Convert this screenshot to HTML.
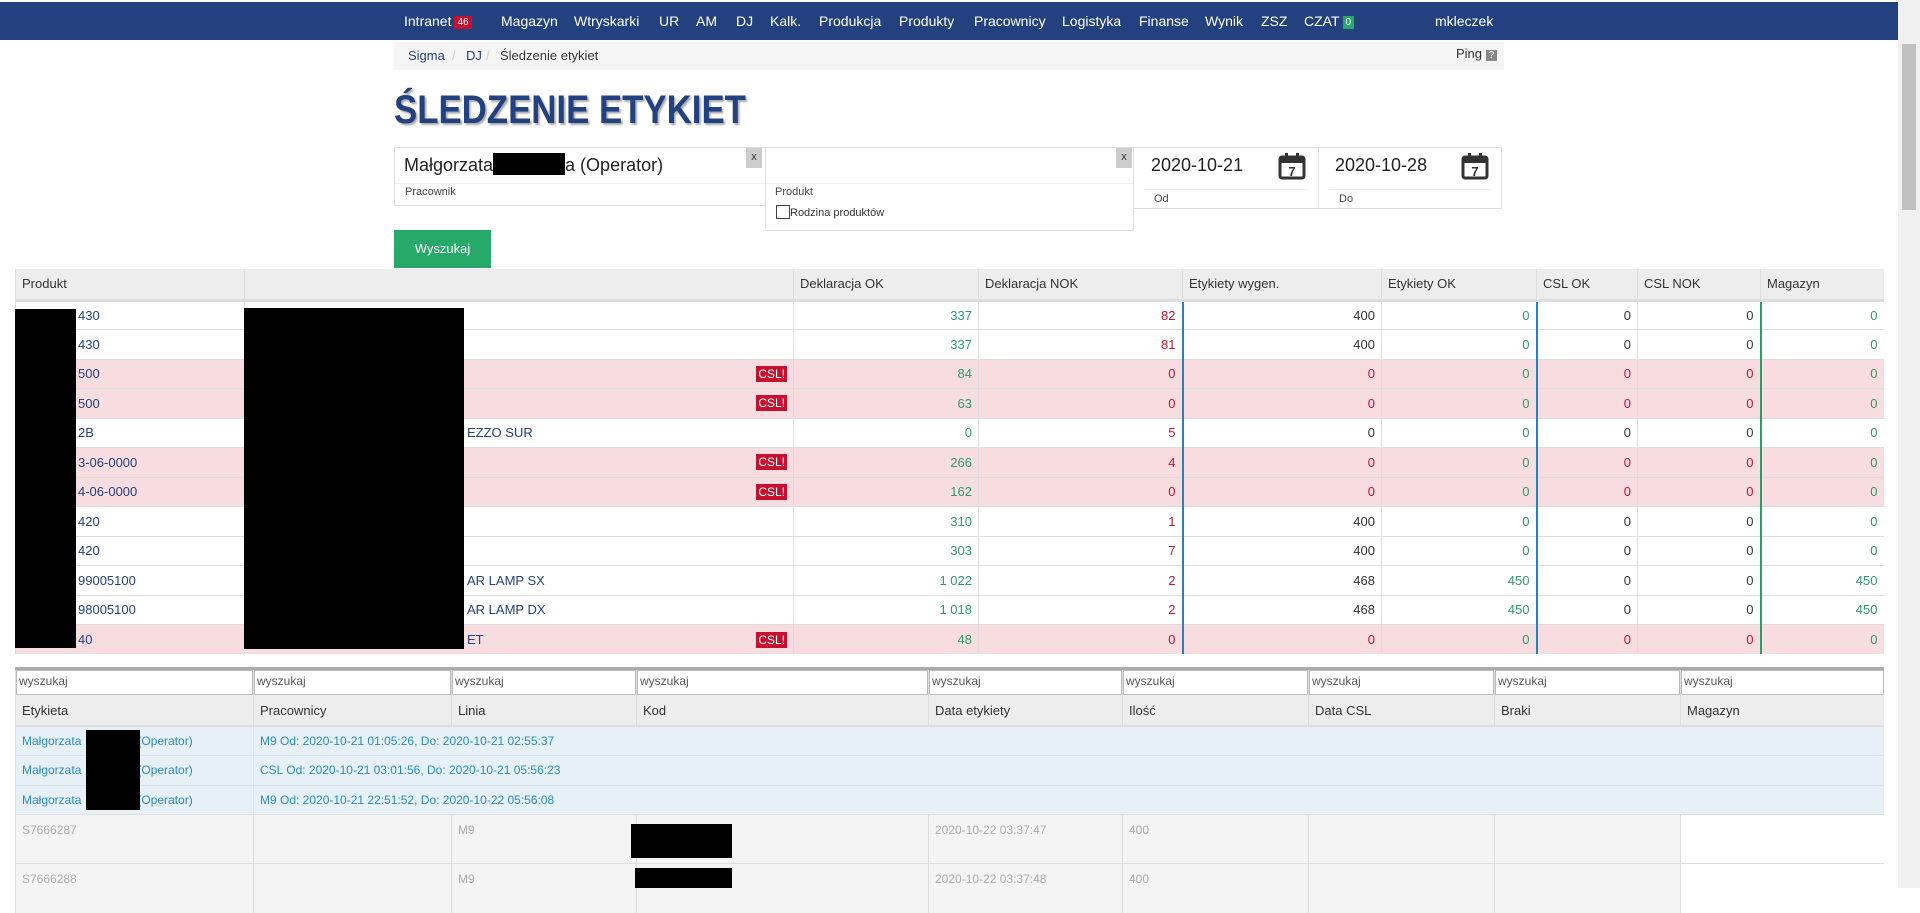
<!DOCTYPE html>
<html><head><meta charset="utf-8">
<style>
*{box-sizing:border-box;margin:0;padding:0}
body{width:1920px;height:888px;overflow:hidden;background:#fff;font-family:"Liberation Sans",Arial,sans-serif;font-size:13px;color:#333;position:relative}
.nav{position:absolute;left:0;top:2px;width:1898px;height:38px;background:#23407f;color:#fff;font-size:14px}
.nav span{position:absolute;top:11px}
.badge{display:inline-block;font-size:10px;padding:1px 3px;margin-left:3px;vertical-align:1px}
.bc{position:absolute;left:394px;top:42px;width:1110px;height:28px;background:#f5f5f5;font-size:13px}
h1{position:absolute;left:394px;top:88px;font-size:40px;font-weight:bold;color:#23407f;text-shadow:2px 2px 2px #aaa;transform:scaleX(0.87);transform-origin:left top;white-space:nowrap}
.box{position:absolute;border:1px solid #ddd;background:#fff}
.lbl{position:absolute;font-size:11px;color:#444}
.x{position:absolute;top:0;width:16px;height:20px;background:#ccc;font-size:11px;text-align:center;line-height:18px}
.btn{position:absolute;left:394px;top:230px;width:97px;height:38px;background:#27a96a;color:#fff;font-size:13px;text-align:center;line-height:38px}
table{border-collapse:collapse;table-layout:fixed;position:absolute;left:15px}
td,th{white-space:nowrap;overflow:hidden;padding:0 6px;font-size:13px}
#t1 th{height:31px;background:#ededed;text-align:left;font-weight:normal;color:#333;border-left:1px solid #ddd;border-bottom:3px solid #ddd}
#t1 td{height:29.5px;border-top:1px solid #ddd;border-left:1px solid #ddd;text-align:right}
#t1 td.l{text-align:left;color:#23407f}
#t1 td.c{padding-left:62px}
#t1 td.n{padding-left:222px}
#t1 tr.p td{background:#f8dde0}
.g{color:#2e9a68}.r{color:#c8102e}
.bl{border-left:2px solid #2a7fc0!important}
.gl{border-left:2px solid #2e9a68!important}
.csl{float:right;background:#c8102e;color:#fff;font-size:12px;padding:1px 2px}
#t2 td,#t2 th{border-left:1px solid #ddd}
#t2 tr.s td{height:25px;padding:0;border-top:3px solid #aaa}
#t2 tr.s td div{border:1px solid #bbb;height:25px;font-size:12px;color:#555;padding:3px 2px;background:#fff}
#t2 th{height:31px;background:#ededed;text-align:left;font-weight:normal;border-bottom:2px solid #ddd}
#t2 tr.b td{height:29.5px;background:#e6f1f7;color:#2a8ac0;border-top:1px solid #d5e3ea;font-size:12px}
#t2 tr.gr td{height:49px;background:#f4f4f4;color:#aaa;border-top:1px solid #ddd;vertical-align:top;padding-top:8px;font-size:12px}
.blk{position:absolute;background:#000}
.sp{display:inline-block;width:56px}
</style></head><body>
<div class="nav">
<span style="left:404px">Intranet<span class="badge" style="position:static;background:#c8102e">46</span></span>
<span style="left:501px">Magazyn</span>
<span style="left:574px">Wtryskarki</span>
<span style="left:659px">UR</span>
<span style="left:696px">AM</span>
<span style="left:736px">DJ</span>
<span style="left:770px">Kalk.</span>
<span style="left:819px">Produkcja</span>
<span style="left:899px">Produkty</span>
<span style="left:974px">Pracownicy</span>
<span style="left:1062px">Logistyka</span>
<span style="left:1139px">Finanse</span>
<span style="left:1205px">Wynik</span>
<span style="left:1261px">ZSZ</span>
<span style="left:1304px">CZAT<span class="badge" style="position:static;background:#27a96a">0</span></span>
<span style="left:1435px">mkleczek</span>
</div>
<div class="bc"><span style="position:absolute;left:14px;top:6px;color:#23407f">Sigma</span><span style="position:absolute;left:58px;top:6px;color:#ccc">/</span><span style="position:absolute;left:72px;top:6px;color:#23407f">DJ</span><span style="position:absolute;left:92px;top:6px;color:#ccc">/</span><span style="position:absolute;left:106px;top:6px">Śledzenie etykiet</span><span style="position:absolute;left:1062px;top:4px">Ping <span style="background:#888;color:#fff;font-size:10px;padding:0 3px">?</span></span></div>
<h1>ŚLEDZENIE ETYKIET</h1>
<div class="box" style="left:394px;top:147px;width:372px;height:59px"><span style="position:absolute;left:9px;top:5px;font-size:18px;color:#222">Małgorzata<span style="display:inline-block;width:72px;height:22px;background:#000;vertical-align:-4px"></span>a (Operator)</span><div style="position:absolute;left:0;right:0;top:35px;border-top:1px solid #eee"></div><span class="lbl" style="left:10px;top:38px">Pracownik</span><div class="x" style="left:351px">x</div></div>
<div class="box" style="left:765px;top:147px;width:369px;height:84px"><div class="x" style="left:350px">x</div><div style="position:absolute;left:0;right:0;top:35px;border-top:1px solid #eee"></div><span class="lbl" style="left:9px;top:38px">Produkt</span><span style="position:absolute;left:10px;top:57px;font-size:11px"><span style="display:inline-block;width:14px;height:14px;border:1px solid #444;vertical-align:-3px"></span>Rodzina produktów</span></div>
<div class="box" style="left:1133px;top:147px;width:186px;height:62px"><span style="position:absolute;left:17px;top:7px;font-size:18px;color:#222">2020-10-21</span><svg style="position:absolute;left:144px;top:4px" width="28" height="28" viewBox="0 0 28 28"><rect x="2" y="5" width="24" height="21" rx="2" fill="none" stroke="#333" stroke-width="3"/><rect x="2" y="5" width="24" height="6" fill="#333"/><rect x="7" y="1" width="3" height="6" fill="#333"/><rect x="18" y="1" width="3" height="6" fill="#333"/><text x="14" y="24" font-size="13" font-weight="bold" text-anchor="middle" fill="#333" font-family="Liberation Sans">7</text></svg><div style="position:absolute;left:10px;right:10px;top:41px;border-top:1px solid #eee"></div><span class="lbl" style="left:20px;top:45px">Od</span></div>
<div class="box" style="left:1318px;top:147px;width:184px;height:62px"><span style="position:absolute;left:16px;top:7px;font-size:18px;color:#222">2020-10-28</span><svg style="position:absolute;left:142px;top:4px" width="28" height="28" viewBox="0 0 28 28"><rect x="2" y="5" width="24" height="21" rx="2" fill="none" stroke="#333" stroke-width="3"/><rect x="2" y="5" width="24" height="6" fill="#333"/><rect x="7" y="1" width="3" height="6" fill="#333"/><rect x="18" y="1" width="3" height="6" fill="#333"/><text x="14" y="24" font-size="13" font-weight="bold" text-anchor="middle" fill="#333" font-family="Liberation Sans">7</text></svg><div style="position:absolute;left:10px;right:10px;top:41px;border-top:1px solid #eee"></div><span class="lbl" style="left:20px;top:45px">Do</span></div>
<div class="btn">Wyszukaj</div>

<table id="t1" style="top:269px;width:1868px">
<colgroup><col style="width:229px"><col style="width:549px"><col style="width:185px"><col style="width:204px"><col style="width:199px"><col style="width:155px"><col style="width:101px"><col style="width:123px"><col style="width:123px"></colgroup>
<tr><th>Produkt</th><th></th><th>Deklaracja OK</th><th>Deklaracja NOK</th><th>Etykiety wygen.</th><th>Etykiety OK</th><th>CSL OK</th><th>CSL NOK</th><th>Magazyn</th></tr>
<tr><td class="l c">430</td><td class="l"></td><td class="g">337</td><td class="r">82</td><td class="bl">400</td><td class="g">0</td><td class="bl">0</td><td>0</td><td class="gl g">0</td></tr>
<tr><td class="l c">430</td><td class="l"></td><td class="g">337</td><td class="r">81</td><td class="bl">400</td><td class="g">0</td><td class="bl">0</td><td>0</td><td class="gl g">0</td></tr>
<tr class="p"><td class="l c">500</td><td class="l"><span class="csl">CSL!</span></td><td class="g">84</td><td class="r">0</td><td class="bl r">0</td><td class="g">0</td><td class="bl r">0</td><td class="r">0</td><td class="gl g">0</td></tr>
<tr class="p"><td class="l c">500</td><td class="l"><span class="csl">CSL!</span></td><td class="g">63</td><td class="r">0</td><td class="bl r">0</td><td class="g">0</td><td class="bl r">0</td><td class="r">0</td><td class="gl g">0</td></tr>
<tr><td class="l c">2B</td><td class="l n">EZZO SUR</td><td class="g">0</td><td class="r">5</td><td class="bl">0</td><td class="g">0</td><td class="bl">0</td><td>0</td><td class="gl g">0</td></tr>
<tr class="p"><td class="l c">3-06-0000</td><td class="l"><span class="csl">CSL!</span></td><td class="g">266</td><td class="r">4</td><td class="bl r">0</td><td class="g">0</td><td class="bl r">0</td><td class="r">0</td><td class="gl g">0</td></tr>
<tr class="p"><td class="l c">4-06-0000</td><td class="l"><span class="csl">CSL!</span></td><td class="g">162</td><td class="r">0</td><td class="bl r">0</td><td class="g">0</td><td class="bl r">0</td><td class="r">0</td><td class="gl g">0</td></tr>
<tr><td class="l c">420</td><td class="l"></td><td class="g">310</td><td class="r">1</td><td class="bl">400</td><td class="g">0</td><td class="bl">0</td><td>0</td><td class="gl g">0</td></tr>
<tr><td class="l c">420</td><td class="l"></td><td class="g">303</td><td class="r">7</td><td class="bl">400</td><td class="g">0</td><td class="bl">0</td><td>0</td><td class="gl g">0</td></tr>
<tr><td class="l c">99005100</td><td class="l n">AR LAMP SX</td><td class="g">1 022</td><td class="r">2</td><td class="bl">468</td><td class="g">450</td><td class="bl">0</td><td>0</td><td class="gl g">450</td></tr>
<tr><td class="l c">98005100</td><td class="l n">AR LAMP DX</td><td class="g">1 018</td><td class="r">2</td><td class="bl">468</td><td class="g">450</td><td class="bl">0</td><td>0</td><td class="gl g">450</td></tr>
<tr class="p"><td class="l c">40</td><td class="l n">ET<span class="csl">CSL!</span></td><td class="g">48</td><td class="r">0</td><td class="bl r">0</td><td class="g">0</td><td class="bl r">0</td><td class="r">0</td><td class="gl g">0</td></tr>
</table>
<div class="blk" style="left:15px;top:309px;width:61px;height:339px"></div>
<div class="blk" style="left:244px;top:308px;width:220px;height:341px"></div>

<table id="t2" style="top:667px;width:1868px">
<colgroup><col style="width:238px"><col style="width:198px"><col style="width:185px"><col style="width:292px"><col style="width:194px"><col style="width:186px"><col style="width:186px"><col style="width:186px"><col style="width:203px"></colgroup>
<tr class="s"><td><div>wyszukaj</div></td><td><div>wyszukaj</div></td><td><div>wyszukaj</div></td><td><div>wyszukaj</div></td><td><div>wyszukaj</div></td><td><div>wyszukaj</div></td><td><div>wyszukaj</div></td><td><div>wyszukaj</div></td><td><div>wyszukaj</div></td></tr>
<tr><th>Etykieta</th><th>Pracownicy</th><th>Linia</th><th>Kod</th><th>Data etykiety</th><th>Ilość</th><th>Data CSL</th><th>Braki</th><th>Magazyn</th></tr>
<tr class="b"><td>Małgorzata<span class="sp"></span>(Operator)</td><td colspan="8" style="border-left:1px solid #d5e3ea">M9 Od: 2020-10-21 01:05:26, Do: 2020-10-21 02:55:37</td></tr>
<tr class="b"><td>Małgorzata<span class="sp"></span>(Operator)</td><td colspan="8" style="border-left:1px solid #d5e3ea">CSL Od: 2020-10-21 03:01:56, Do: 2020-10-21 05:56:23</td></tr>
<tr class="b"><td>Małgorzata<span class="sp"></span>(Operator)</td><td colspan="8" style="border-left:1px solid #d5e3ea">M9 Od: 2020-10-21 22:51:52, Do: 2020-10-22 05:56:08</td></tr>
<tr class="gr"><td>S7666287</td><td></td><td>M9</td><td></td><td>2020-10-22 03:37:47</td><td>400</td><td></td><td></td><td style="background:#fff"></td></tr>
<tr class="gr"><td>S7666288</td><td></td><td>M9</td><td></td><td>2020-10-22 03:37:48</td><td>400</td><td></td><td></td><td style="background:#fff"></td></tr>
</table>
<div class="blk" style="left:86px;top:730px;width:54px;height:80px"></div>
<div class="blk" style="left:631px;top:824px;width:101px;height:34px"></div>
<div class="blk" style="left:635px;top:868px;width:97px;height:20px"></div>

<div style="position:absolute;left:1898px;top:0;width:22px;height:888px;background:#f1f1f1"></div>
<div style="position:absolute;left:1902px;top:44px;width:14px;height:166px;background:#c1c1c1"></div>
</body></html>
